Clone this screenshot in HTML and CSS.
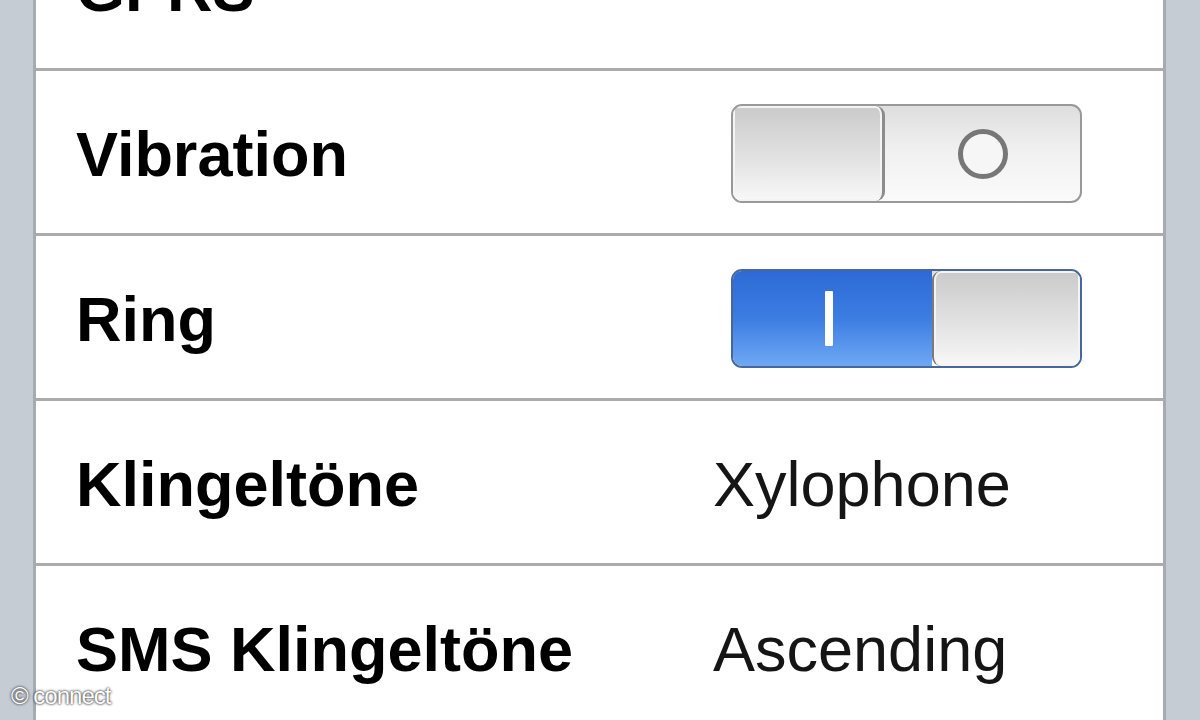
FILE: index.html
```html
<!DOCTYPE html>
<html lang="de">

<head>
    <meta charset="UTF-8">
    <meta name="viewport" content="width=device-width, initial-scale=1.0">
    <title>Töne</title>
    <link rel="stylesheet" href="styles.css">
</head>

<body>
    <div class="table">
        <div class="row">
            <span class="label">GPRS</span>
        </div>
        <div class="row">
            <span class="label">Vibration</span>
            <div class="switch">
                <div class="knob"></div>
                <div class="track">
                    <span class="circle"></span>
                </div>
            </div>
        </div>
        <div class="row">
            <span class="label">Ring</span>
            <div class="switch on">
                <div class="track">
                    <span class="bar"></span>
                </div>
                <div class="knob"></div>
            </div>
        </div>
        <div class="row">
            <span class="label">Klingeltöne</span>
            <span class="value">Xylophone</span>
        </div>
        <div class="row">
            <span class="label">SMS Klingeltöne</span>
            <span class="value">Ascending</span>
        </div>
    </div>
    <div class="credit">© connect</div>
</body>

</html>
```

FILE: styles.css
```css
* {
    margin: 0;
    padding: 0;
    box-sizing: border-box;
}

body {
    background-color: #c6ccd4;
    font-family: "Liberation Sans", Arial, sans-serif;
    height: 720px;
    overflow: hidden;
}

.table {
    margin: -94px 34px 0 33px;
    background-color: #fff;
    border-left: 3px solid #a6abb1;
    border-right: 3px solid #a6abb1;
}

.row {
    height: 165px;
    display: flex;
    align-items: center;
    padding: 3px 81px 0 40px;
    border-bottom: 3px solid #ababab;
}

.label {
    font-size: 63px;
    font-weight: bold;
    color: #000;
}

.value {
    margin-left: auto;
    width: 369px;
    font-size: 63px;
    color: #151515;
}

.switch {
    margin-left: auto;
    width: 351px;
    height: 99px;
    display: flex;
    border: 2px solid #999;
    border-radius: 11px;
    overflow: hidden;
    background: linear-gradient(#dedede, #f0f0f0 45%, #fbfbfb);
}

.knob {
    width: 152px;
    border-right: 3px solid #8c8c8c;
    border-radius: 0 9px 9px 0;
    background: linear-gradient(#cacaca, #e4e4e4 60%, #f8f8f8);
    box-shadow: inset 0 0 0 2px #f4f4f4;
}

.track {
    flex: 1;
    display: flex;
    align-items: center;
    justify-content: center;
}

.circle {
    width: 50px;
    height: 50px;
    border: 5px solid #777;
    border-radius: 50%;
    background-color: #f6f6f6;
}

.switch.on {
    border-color: #46679a;
}

.on .track {
    background: linear-gradient(#2d6ad6, #3c7de2 50%, #6ea8f4);
    padding-right: 8px;
}

.on .knob {
    width: 148px;
    border-right: none;
    border-left: 2px solid #7a7a7a;
    border-radius: 9px 0 0 9px;
}

.bar {
    width: 8px;
    height: 55px;
    background-color: #fff;
    border-radius: 1px;
}

.credit {
    position: absolute;
    left: 11px;
    bottom: 10px;
    font-size: 24px;
    letter-spacing: -1px;
    color: #fff;
    text-shadow: 0 0 2px #333, 0 0 3px #555;
}
```
